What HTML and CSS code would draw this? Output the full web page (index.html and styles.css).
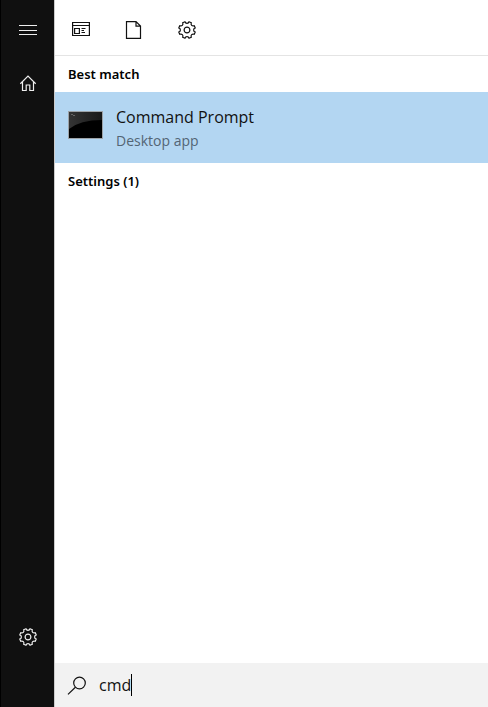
FILE: index.html
```html
<!DOCTYPE html>
<html lang="en">
<head>
<meta charset="utf-8">
<title>Search</title>
<link rel="stylesheet" href="styles.css">
</head>
<body>
<svg class="sprite" aria-hidden="true">
  <symbol id="gear" viewBox="-9 -9 18 18">
    <path d="M8.200 2.100 7.300 4.300C5.200 3.400 3.400 5.200 4.300 7.300L2.100 8.200C1.400 6.100-1.400 6.100-2.100 8.200L-4.300 7.300C-3.400 5.200-5.200 3.400-7.300 4.300L-8.200 2.100C-6.100 1.400-6.100-1.400-8.200-2.100L-7.300-4.300C-5.200-3.400-3.400-5.200-4.300-7.300L-2.100-8.200C-1.400-6.100 1.400-6.100 2.100-8.200L4.300-7.300C3.400-5.200 5.200-3.400 7.300-4.300L8.200-2.100C6.100-1.400 6.100 1.400 8.200 2.100Z"/>
    <circle r="2.900"/>
  </symbol>
</svg>
<div class="panel">
  <nav class="rail" aria-label="Main">
    <button class="rail-button" type="button" aria-label="Menu">
      <svg class="icon" viewBox="0 0 18 18"><path d="M0 4.500h18M0 9.500h18M0 13.500h18"/></svg>
    </button>
    <button class="rail-button" type="button" aria-label="Home">
      <svg class="icon" viewBox="0 0 18 18"><path d="M1.300 8.700 9 1.100l7.700 7.600M3.500 7v8.500h3.700v-5.500h3.600v5.500h3.700V7"/></svg>
    </button>
    <button class="rail-button rail-bottom" type="button" aria-label="Settings">
      <svg class="icon"><use href="#gear"/></svg>
    </button>
  </nav>
  <main class="content">
    <div class="filters">
      <button class="filter" type="button" aria-label="Apps">
        <svg class="icon" viewBox="0 0 18 18"><path d="M.6 1.500h16.800v13H.6zM.6 4.500h16.800M2.600 7.500h4.800v5H2.600zM9.500 7.500h4M9.500 9.500h2.500M9.500 11.500h3.500"/></svg>
      </button>
      <button class="filter" type="button" aria-label="Documents">
        <svg class="icon" viewBox="0 0 18 18"><path d="M1.500.6h9.500l4.500 4.500v12.300h-14zM11 .6v4.500h4.500"/></svg>
      </button>
      <button class="filter" type="button" aria-label="Settings results">
        <svg class="icon"><use href="#gear"/></svg>
      </button>
    </div>
    <section>
      <h2 class="heading">Best match</h2>
      <a class="result" href="#">
        <svg class="app-icon" viewBox="0 0 35 28">
          <defs>
            <linearGradient id="gloss" x1="0" y1="0" x2="1" y2="0"><stop offset="0" stop-color="#343434"/><stop offset="1" stop-color="#191919"/></linearGradient>
          </defs>
          <rect width="35" height="28" fill="#9da3a8"/>
          <rect x="1" y="1" width="33" height="26" fill="#000"/>
          <path d="M1 1h33v8Q12 9 1 18z" fill="url(#gloss)"/>
          <path d="M3 3.500h2M5 4.500h2" stroke="#666" fill="none"/>
        </svg>
        <span class="result-text">
          <span class="result-title">Command Prompt</span>
          <span class="result-kind">Desktop app</span>
        </span>
      </a>
    </section>
    <section>
      <h2 class="heading">Settings (1)</h2>
    </section>
    <label class="search">
      <svg class="search-icon" viewBox="0 0 20 20" aria-hidden="true"><circle cx="12.500" cy="8" r="5.800"/><path d="M8.400 12.200 1 19.400"/></svg>
      <span class="field">
        <input class="search-input" type="text" value="cmd" aria-label="Search">
        <span class="caret"></span>
      </span>
    </label>
  </main>
</div>
</body>
</html>
```
FILE: styles.css
```css
* {
  box-sizing: border-box;
}

body {
  margin: 0;
  background: #fff;
  color: #111;
  font-family: "Segoe UI", "Noto Sans", "Open Sans", sans-serif;
}

button {
  display: flex;
  align-items: center;
  justify-content: center;
  border: 0;
  padding: 0;
  background: none;
  color: inherit;
}

.sprite {
  position: absolute;
  width: 0;
  height: 0;
}

.icon,
.search-icon {
  fill: none;
  stroke: currentColor;
  stroke-width: 1.2;
}

.icon {
  width: 18px;
  height: 18px;
}

.panel {
  display: flex;
  min-height: 100vh;
}

.rail {
  display: flex;
  flex: none;
  flex-direction: column;
  width: 54px;
  padding: 3px 0 43px;
  border-left: 1px solid #000;
  background: #101010;
  color: #eee;
}

.rail-button {
  height: 54px;
}

.rail-bottom {
  margin-top: auto;
}

.content {
  display: flex;
  flex: 1;
  flex-direction: column;
  border-left: 1px solid #ccc;
}

.filters {
  display: flex;
  gap: 1px;
  height: 56px;
  padding-top: 5px;
  border-bottom: 1px solid #e4e4e4;
}

.filter {
  width: 52px;
}

.heading {
  margin: 0;
  padding: 0 13px;
  color: #000;
  font-size: 13px;
  font-weight: 600;
  line-height: 36px;
}

.result {
  display: flex;
  gap: 13px;
  padding: 13px 13px 12px;
  background: #b3d6f2;
  color: inherit;
  text-decoration: none;
}

.app-icon {
  width: 35px;
  height: 28px;
  margin-top: 6px;
}

.result-text {
  display: flex;
  flex-direction: column;
  gap: 1px;
}

.result-title {
  font-family: "Segoe UI", "Open Sans", "Noto Sans", sans-serif;
  font-size: 16px;
  line-height: 24px;
}

.result-kind {
  color: #536575;
  font-family: "Segoe UI", "Open Sans", "Noto Sans", sans-serif;
  font-size: 14px;
  line-height: 21px;
}

.search {
  display: flex;
  align-items: center;
  gap: 12px;
  height: 44px;
  margin-top: auto;
  padding-left: 12px;
  background: #f2f2f2;
}

.search-icon {
  width: 20px;
  height: 20px;
}

.field {
  display: flex;
  align-items: center;
}

.search-input {
  field-sizing: content;
  border: 0;
  padding: 0;
  outline: 0;
  background: none;
  color: inherit;
  font: 16px/24px "Segoe UI", "Open Sans", "Noto Sans", sans-serif;
}

.caret {
  width: 1px;
  height: 22px;
  background: #000;
}
```
